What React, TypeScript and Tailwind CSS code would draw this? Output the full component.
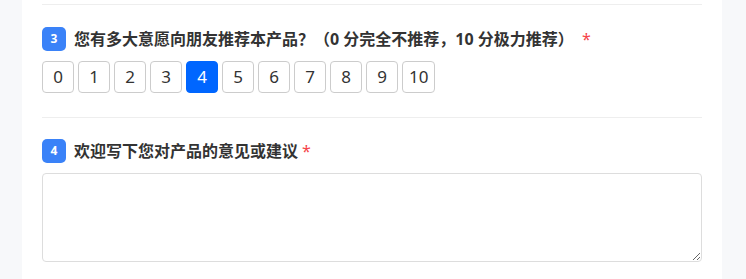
const font = { fontFamily: '"Noto Sans", "Noto Sans CJK SC", sans-serif' };

function QuestionTitle({ no, text }: { no: number; text: string }) {
    return (
        <div className="flex items-center h-6">
            <span className="w-6 h-6 rounded-[5px] bg-[#3a82f8] text-white text-[12px] font-bold flex items-center justify-center shrink-0">
                {no}
            </span>
            <span className="ml-2 text-[16px] font-bold text-[#333] leading-6 whitespace-pre">{text}</span>
            <span className="text-[16px] text-[#f5444b] leading-6 ml-1">*</span>
        </div>
    );
}

export default function App() {
    const selected = 4;
    const scores = Array.from({ length: 11 }, (_, i) => i);

    return (
        <div className="w-[746px] h-[279px] bg-[#f7f8fa] overflow-hidden" style={font}>
            <div className="ml-[22px] w-[700px] h-full bg-white px-5">
                <div className="pt-1">
                    <div className="border-t border-[#eeeeee]" />
                </div>

                {/* Question 3 */}
                <div className="pt-[22px] pb-6">
                    <QuestionTitle no={3} text="您有多大意愿向朋友推荐本产品？（0 分完全不推荐，10 分极力推荐） " />
                    <div className="flex gap-1 mt-[10px]">
                        {scores.map((n) => (
                            <button
                                key={n}
                                className={`min-w-8 h-8 px-[6px] rounded-[4px] border text-[17px] flex items-center justify-center ${
                                    n === selected
                                        ? 'bg-[#0066ff] border-[#0066ff] text-white'
                                        : 'bg-white border-[#cccccc] text-[#333]'
                                }`}
                            >
                                {n}
                            </button>
                        ))}
                    </div>
                </div>

                <div className="border-t border-[#eeeeee]" />

                {/* Question 4 */}
                <div className="pt-[21px]">
                    <QuestionTitle no={4} text="欢迎写下您对产品的意见或建议" />
                    <textarea className="mt-[10px] block w-full h-[89px] border border-[#dddddd] rounded-[4px] outline-none" />
                </div>
            </div>
        </div>
    );
}
